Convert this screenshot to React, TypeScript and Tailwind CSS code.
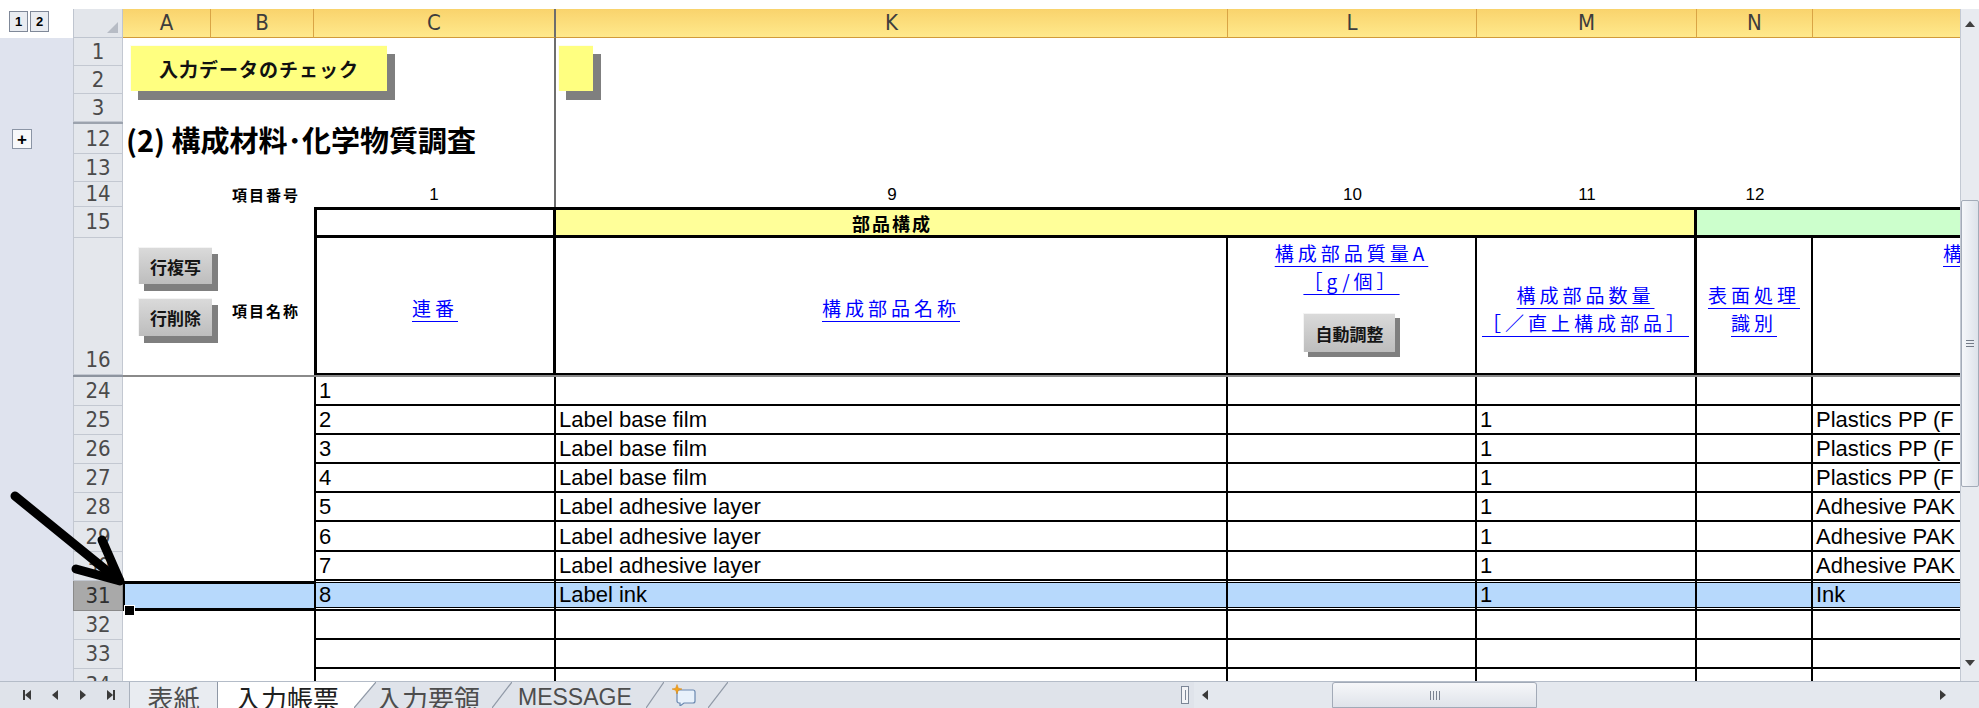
import React from "react";

const NARROW =
  "font-['Liberation_Sans_Narrow','DejaVu_Sans_Condensed','Liberation_Sans',sans-serif]";
const SANS = "font-['Liberation_Sans','Noto_Sans_CJK_JP',sans-serif]";
const JP = "font-['Noto_Sans_CJK_JP','Noto_Sans_CJK_SC',sans-serif]";

type Kids = { children?: React.ReactNode };

function Outline({ className = "", children }: { className?: string } & Kids) {
  return <div className={`w-[73px] shrink-0 bg-[#dfe3ee] ${className}`}>{children}</div>;
}

function RowHead({ n, active, bottom }: { n?: string; active?: boolean; bottom?: boolean }) {
  const tone = active
    ? "bg-[#a9a9a9] border-[#8a8a8a] text-[#2f2f2f]"
    : "bg-[#e4e7ec] border-[#c3c8d1] text-[#4b4b4b]";
  const place = bottom ? "items-end pb-[3px]" : "items-center";
  return (
    <div
      className={`flex w-[50px] shrink-0 justify-center border-x border-b text-[22px] leading-none ${NARROW} ${tone} ${place}`}
    >
      {n}
    </div>
  );
}

function Level({ children }: Kids) {
  return (
    <div className="flex h-[21px] w-[19px] items-center justify-center border border-[#7f8898] bg-[#e9ecf1] text-[13px] font-bold leading-none text-black">
      {children}
    </div>
  );
}

const HEAD = `flex shrink-0 items-center justify-center border-b border-b-[#d19a3a] bg-linear-to-b from-[#f9d36c] to-[#ffe98c] text-[22px] leading-none text-[#3d3d3d] ${NARROW}`;

function ColumnHeaders() {
  return (
    <div className="flex h-[29px] shrink-0">
      <div className="flex w-[73px] shrink-0 items-start gap-[2px] bg-white pl-[9px] pt-[2px]">
        <Level>1</Level>
        <Level>2</Level>
      </div>
      <div className="relative w-[50px] shrink-0 border-x border-b border-[#bfc5cf] bg-[#e3e6eb]">
        <div className="absolute bottom-[4px] right-[4px] h-0 w-0 border-b-[11px] border-l-[11px] border-b-[#b7bcc5] border-l-transparent" />
      </div>
      <div className={`w-[88px] border-r border-r-[#d9a445] ${HEAD}`}>A</div>
      <div className={`w-[103px] border-r border-r-[#d9a445] ${HEAD}`}>B</div>
      <div className={`w-[242px] border-r-2 border-r-[#6d6d6d] ${HEAD}`}>C</div>
      <div className={`w-[672px] border-r border-r-[#d9a445] ${HEAD}`}>K</div>
      <div className={`w-[249px] border-r border-r-[#d9a445] ${HEAD}`}>L</div>
      <div className={`w-[220px] border-r border-r-[#d9a445] ${HEAD}`}>M</div>
      <div className={`w-[116px] border-r border-r-[#d9a445] ${HEAD}`}>N</div>
      <div className={`w-[147px] ${HEAD}`} />
    </div>
  );
}

function TopRow({ n, h }: { n: string; h: string }) {
  return (
    <div className={`flex shrink-0 ${h}`}>
      <Outline />
      <RowHead n={n} />
      <div className="w-[433px] shrink-0 border-r-2 border-[#6d6d6d]" />
      <div className="w-[1404px] shrink-0" />
    </div>
  );
}

function HiddenRowsMark() {
  return (
    <div className="flex h-[2px] shrink-0">
      <Outline />
      <div className="w-[50px] shrink-0 bg-[#9ca3ae]" />
      <div className="w-[433px] shrink-0 border-r-2 border-[#6d6d6d]" />
      <div className="w-[1404px] shrink-0" />
    </div>
  );
}

function TitleRow() {
  return (
    <div className="flex h-[30px] shrink-0">
      <Outline className="flex items-center pl-[12px]">
        <div className="flex h-[20px] w-[20px] items-center justify-center border border-[#8b95a5] bg-[#f7f8fa] text-[17px] font-bold leading-none text-black">
          +
        </div>
      </Outline>
      <RowHead n="12" />
      <div
        className={`flex w-[433px] shrink-0 items-center whitespace-nowrap border-r-2 border-[#6d6d6d] pl-[3px] text-[29px] font-bold leading-none text-black ${JP}`}
      >
        (2) 構成材料･化学物質調査
      </div>
      <div className="w-[1404px] shrink-0" />
    </div>
  );
}

function NumberRow() {
  const num = "flex shrink-0 items-center justify-center text-[17px] leading-none text-black";
  return (
    <div className="flex h-[25px] shrink-0">
      <Outline />
      <RowHead n="14" />
      <div
        className={`flex w-[191px] shrink-0 items-center justify-end pr-[14px] text-[15px] font-bold leading-none tracking-[2px] ${JP}`}
      >
        項目番号
      </div>
      <div className={`w-[242px] border-r-2 border-[#6d6d6d] ${num}`}>1</div>
      <div className={`w-[672px] ${num}`}>9</div>
      <div className={`w-[249px] ${num}`}>10</div>
      <div className={`w-[220px] ${num}`}>11</div>
      <div className={`w-[116px] ${num}`}>12</div>
      <div className="w-[147px] shrink-0" />
    </div>
  );
}

function GroupRow() {
  return (
    <div className="flex h-[31px] shrink-0">
      <Outline />
      <RowHead n="15" />
      <div className="w-[191px] shrink-0" />
      <div className="w-[242px] shrink-0 border-[3px] border-black bg-white" />
      <div className="flex w-[1141px] shrink-0 border-y-[3px] border-r-[3px] border-black bg-[#ffff99]">
        <div
          className={`flex w-[672px] items-center justify-center text-[18px] font-bold leading-none tracking-[2px] ${JP}`}
        >
          部品構成
        </div>
      </div>
      <div className="w-[263px] shrink-0 border-y-[3px] border-black bg-[#ccffcc]" />
    </div>
  );
}

function Link({ children }: Kids) {
  return (
    <span
      className={`block whitespace-nowrap text-[19px] leading-[28px] tracking-[4px] text-[#0000ff] underline decoration-1 underline-offset-[5px] ${JP}`}
    >
      {children}
    </span>
  );
}

function GrayFace({ className = "", children }: { className?: string } & Kids) {
  return (
    <div
      className={`flex items-center justify-center border-l border-t border-[#f4f4f4] bg-linear-to-b from-[#dadada] to-[#bdbdbd] text-[17px] font-bold leading-none text-[#151515] ${JP} ${className}`}
    >
      {children}
    </div>
  );
}

function HeadingRow() {
  return (
    <div className="flex h-[137px] shrink-0">
      <Outline />
      <RowHead n="16" bottom />
      <div
        className={`flex w-[191px] shrink-0 items-center justify-end pr-[14px] pt-[8px] text-[15px] font-bold leading-none tracking-[2px] ${JP}`}
      >
        項目名称
      </div>
      <div className="flex w-[242px] shrink-0 items-center justify-center border-x-[3px] border-b-2 border-black pt-[5px]">
        <Link>連番</Link>
      </div>
      <div className="flex w-[672px] shrink-0 items-center justify-center border-b-2 border-r-2 border-black pt-[4px]">
        <Link>構成部品名称</Link>
      </div>
      <div className="flex w-[249px] shrink-0 flex-col items-center border-b-2 border-r-2 border-black pt-[1px]">
        <Link>構成部品質量A</Link>
        <Link>［g/個］</Link>
        <div className="relative mt-[18px] h-[44px] w-[97px]">
          <div className="absolute left-[5px] top-[5px] h-[39px] w-[92px] bg-[#7f7f7f]" />
          <GrayFace className="absolute left-0 top-0 h-[39px] w-[92px]">自動調整</GrayFace>
        </div>
      </div>
      <div className="flex w-[220px] shrink-0 flex-col items-center justify-center border-b-2 border-r-[3px] border-black pt-[7px]">
        <Link>構成部品数量</Link>
        <Link>［／直上構成部品］</Link>
      </div>
      <div className="flex w-[116px] shrink-0 flex-col items-center justify-center border-b-2 border-r-2 border-black pt-[7px]">
        <Link>表面処理</Link>
        <Link>識別</Link>
      </div>
      <div className="w-[147px] shrink-0 overflow-hidden border-b-2 border-black pl-[130px] pt-[1px]">
        <Link>構成材料</Link>
      </div>
    </div>
  );
}

function FreezeLine() {
  return (
    <div className="flex h-[2px] shrink-0">
      <Outline />
      <div className="w-[50px] shrink-0 bg-[#8d949f]" />
      <div className="w-[1837px] shrink-0 bg-[#8a8a8a]" />
    </div>
  );
}

function Cell({ className, children }: { className: string } & Kids) {
  return (
    <div
      className={`flex shrink-0 items-end overflow-hidden whitespace-nowrap border-b-2 border-black pb-[2px] pl-[3px] text-[22px] leading-[22px] text-black ${SANS} ${className}`}
    >
      {children}
    </div>
  );
}

type Item = { n: string; h: string; c?: string; k?: string; m?: string; o?: string };

const upper: Item[] = [
  { n: "24", h: "h-[29px]", c: "1" },
  { n: "25", h: "h-[29px]", c: "2", k: "Label base film", m: "1", o: "Plastics PP (F" },
  { n: "26", h: "h-[29px]", c: "3", k: "Label base film", m: "1", o: "Plastics PP (F" },
  { n: "27", h: "h-[29px]", c: "4", k: "Label base film", m: "1", o: "Plastics PP (F" },
  { n: "28", h: "h-[29px]", c: "5", k: "Label adhesive layer", m: "1", o: "Adhesive PAK" },
  { n: "29", h: "h-[30px]", c: "6", k: "Label adhesive layer", m: "1", o: "Adhesive PAK" },
  { n: "30", h: "h-[29px]", c: "7", k: "Label adhesive layer", m: "1", o: "Adhesive PAK" },
];

const lower: Item[] = [
  { n: "32", h: "h-[29px]" },
  { n: "33", h: "h-[29px]" },
];

function DataRow({ n, h, c, k, m, o }: Item) {
  return (
    <div className={`flex shrink-0 ${h}`}>
      <Outline />
      <RowHead n={n} />
      <div className="w-[191px] shrink-0" />
      <Cell className="w-[242px] border-x-2">{c}</Cell>
      <Cell className="w-[672px] border-r-2">{k}</Cell>
      <Cell className="w-[249px] border-r-2" />
      <Cell className="w-[220px] border-r-2">{m}</Cell>
      <Cell className="w-[116px] border-r-2" />
      <Cell className="w-[147px]">{o}</Cell>
    </div>
  );
}

function SelCell({ className, children }: { className: string } & Kids) {
  return (
    <div className={`flex shrink-0 flex-col border-black bg-[#b7d9fc] ${className}`}>
      <div className="h-px bg-white" />
      <div className="h-px bg-black" />
      <div
        className={`flex flex-1 items-end overflow-hidden whitespace-nowrap pb-[1px] pl-[3px] text-[22px] leading-[22px] text-black ${SANS}`}
      >
        {children}
      </div>
      <div className="h-px bg-black" />
      <div className="h-px bg-white" />
      <div className="h-[2px] bg-black" />
    </div>
  );
}

function ActiveRow() {
  return (
    <div className="flex h-[30px] shrink-0">
      <Outline />
      <RowHead n="31" active />
      <div className="w-[191px] shrink-0 border-y-[3px] border-l-2 border-black bg-[#b7d9fc]" />
      <SelCell className="w-[242px] border-x-2">8</SelCell>
      <SelCell className="w-[672px] border-r-2">Label ink</SelCell>
      <SelCell className="w-[249px] border-r-2" />
      <SelCell className="w-[220px] border-r-2">1</SelCell>
      <SelCell className="w-[116px] border-r-2" />
      <SelCell className="w-[147px]">Ink</SelCell>
    </div>
  );
}

function CutRow() {
  return (
    <div className="flex h-[12px] shrink-0 overflow-hidden">
      <Outline />
      <div
        className={`flex w-[50px] shrink-0 justify-center border-x border-[#c3c8d1] bg-[#e4e7ec] pt-[5px] text-[22px] leading-none text-[#4b4b4b] ${NARROW}`}
      >
        34
      </div>
      <div className="w-[191px] shrink-0" />
      <div className="w-[242px] shrink-0 border-x-2 border-black" />
      <div className="w-[672px] shrink-0 border-r-2 border-black" />
      <div className="w-[249px] shrink-0 border-r-2 border-black" />
      <div className="w-[220px] shrink-0 border-r-2 border-black" />
      <div className="w-[116px] shrink-0 border-r-2 border-black" />
      <div className="w-[147px] shrink-0" />
    </div>
  );
}

function Up() {
  return <div className="h-0 w-0 border-x-[5px] border-b-[6px] border-x-transparent border-b-[#404040]" />;
}
function Down() {
  return <div className="h-0 w-0 border-x-[5px] border-t-[6px] border-x-transparent border-t-[#404040]" />;
}
function Left() {
  return <div className="h-0 w-0 border-y-[5px] border-r-[6px] border-y-transparent border-r-[#3a3a3a]" />;
}
function Right() {
  return <div className="h-0 w-0 border-y-[5px] border-l-[6px] border-y-transparent border-l-[#3a3a3a]" />;
}

function VScroll() {
  return (
    <div className="flex w-[19px] shrink-0 flex-col border-l border-[#c3c9d3] bg-[#e8ebf0]">
      <div className="flex h-[30px] items-center justify-center">
        <Up />
      </div>
      <div className="h-[161px]" />
      <div className="flex h-[287px] items-center justify-center rounded-[2px] border border-[#a3abb8] bg-linear-to-r from-[#f5f7fa] to-[#dde2ea]">
        <div className="flex flex-col gap-[2px]">
          <div className="h-px w-[8px] bg-[#737b88]" />
          <div className="h-px w-[8px] bg-[#737b88]" />
          <div className="h-px w-[8px] bg-[#737b88]" />
        </div>
      </div>
      <div className="h-[163px]" />
      <div className="flex h-[26px] items-center justify-center">
        <Down />
      </div>
      <div className="h-[5px]" />
    </div>
  );
}

function Slant({ w, active }: { w: string; active?: boolean }) {
  return (
    <svg className={`${w} h-[26px] shrink-0`} viewBox="0 0 20 26" preserveAspectRatio="none">
      {active && <polygon points="0,0 20,0 0,26" fill="#ffffff" />}
      <line
        x1="0"
        y1="26"
        x2="20"
        y2="0"
        stroke="#8f98a6"
        strokeWidth="1.2"
        vectorEffect="non-scaling-stroke"
      />
    </svg>
  );
}

function NewSheetIcon() {
  return (
    <svg width="28" height="22" viewBox="0 0 28 22">
      <path
        d="M8 6 h14 a2 2 0 0 1 2 2 v9 a2 2 0 0 1 -2 2 h-9 l-4 3 v-3 h-1 a2 2 0 0 1 -2 -2 v-9 a2 2 0 0 1 2 -2z"
        fill="#e8f1fb"
        stroke="#6a88b0"
        strokeWidth="1.2"
      />
      <path
        d="M6 0.5 L7.3 4.2 L11 5 L7.3 6.3 L6 10 L4.7 6.3 L1 5 L4.7 4.2 Z"
        fill="#f3a31c"
        stroke="#d9820b"
        strokeWidth="0.5"
      />
    </svg>
  );
}

function SheetTabs() {
  const tab = `flex shrink-0 pt-[3px] text-[26px] leading-none text-[#4d4d4d] ${JP}`;
  return (
    <div className="flex h-[27px] border-t border-[#b4bcc8] bg-[#dfe3ea]">
      <div className="flex w-[125px] shrink-0 items-center pl-[13px]">
        <div className="flex w-[28px] items-center justify-center">
          <div className="h-[10px] w-[2px] bg-[#3a3a3a]" />
          <Left />
        </div>
        <div className="flex w-[28px] items-center justify-center">
          <Left />
        </div>
        <div className="flex w-[28px] items-center justify-center">
          <Right />
        </div>
        <div className="flex w-[28px] items-center justify-center">
          <Right />
          <div className="h-[10px] w-[2px] bg-[#3a3a3a]" />
        </div>
      </div>
      <div className="w-[5px] shrink-0 border-r border-[#a9b1bd]" />
      <div className={`w-[88px] justify-center border-r border-[#8e97a5] bg-[#e9ecf1] ${tab}`}>表紙</div>
      <div className={`w-[136px] bg-white pl-[17px] ${tab}`}>
        <span className="text-[#202020]">入力帳票</span>
      </div>
      <Slant w="w-[22px]" active />
      <div className={`w-[116px] ${tab}`}>入力要領</div>
      <Slant w="w-[20px]" />
      <div className={`flex w-[134px] shrink-0 pl-[6px] pt-[4px] text-[23px] leading-none text-[#4d4d4d] ${SANS}`}>
        MESSAGE
      </div>
      <Slant w="w-[18px]" />
      <div className="flex w-[44px] shrink-0 items-center pl-[7px]">
        <NewSheetIcon />
      </div>
      <Slant w="w-[20px]" />
      <div className="w-[448px] shrink-0" />
      <div className="flex w-[18px] shrink-0 items-center justify-center">
        <div className="flex h-[18px] w-[8px] justify-center border border-[#7c8696] bg-[#f3f4f7]">
          <div className="mt-[3px] h-[10px] w-px bg-[#7c8696]" />
        </div>
      </div>
      <div className="flex w-[22px] shrink-0 items-center justify-center bg-[#e4e8ee]">
        <Left />
      </div>
      <div className="w-[116px] shrink-0 bg-[#e4e8ee]" />
      <div className="flex w-[205px] shrink-0 items-center justify-center rounded-t-[3px] border border-[#a2aab7] bg-linear-to-b from-[#f6f7f9] to-[#dfe3ea]">
        <div className="flex gap-[2px]">
          <div className="h-[9px] w-px bg-[#7a8290]" />
          <div className="h-[9px] w-px bg-[#7a8290]" />
          <div className="h-[9px] w-px bg-[#7a8290]" />
          <div className="h-[9px] w-px bg-[#7a8290]" />
        </div>
      </div>
      <div className="w-[395px] shrink-0 bg-[#e4e8ee]" />
      <div className="flex w-[22px] shrink-0 items-center justify-center bg-[#e4e8ee]">
        <Right />
      </div>
      <div className="w-[25px] shrink-0 bg-[#e4e8ee]" />
    </div>
  );
}

export default function App() {
  return (
    <div className={`relative h-[708px] w-[1979px] overflow-hidden bg-white ${SANS}`}>
      <div className="h-[9px]" />
      <div className="flex h-[672px]">
        <div className="flex w-[1960px] shrink-0 flex-col">
          <ColumnHeaders />
          <TopRow n="1" h="h-[28px]" />
          <TopRow n="2" h="h-[28px]" />
          <TopRow n="3" h="h-[28px]" />
          <HiddenRowsMark />
          <TitleRow />
          <TopRow n="13" h="h-[28px]" />
          <NumberRow />
          <GroupRow />
          <HeadingRow />
          <FreezeLine />
          {upper.map((r) => (
            <DataRow key={r.n} {...r} />
          ))}
          <ActiveRow />
          {lower.map((r) => (
            <DataRow key={r.n} {...r} />
          ))}
          <CutRow />
        </div>
        <VScroll />
      </div>
      <SheetTabs />

      {/* floating form buttons */}
      <div className="absolute left-[130px] top-[45px] h-[55px] w-[265px]">
        <div className="absolute left-[8px] top-[9px] h-[46px] w-[257px] bg-[#7f7f7f]" />
        <div
          className={`absolute left-0 top-0 flex h-[46px] w-[257px] items-center justify-center border-l border-t border-[#fdfdf0] bg-[#ffff80] text-[19px] font-bold leading-none tracking-[1px] text-[#111] ${JP}`}
        >
          入力データのチェック
        </div>
      </div>
      <div className="absolute left-[558px] top-[45px] h-[55px] w-[43px]">
        <div className="absolute left-[8px] top-[9px] h-[46px] w-[35px] bg-[#7f7f7f]" />
        <div className="absolute left-0 top-0 h-[46px] w-[35px] border-l border-t border-[#fdfdf0] bg-[#ffff80]" />
      </div>
      <div className="absolute left-[138px] top-[247px] h-[44px] w-[80px]">
        <div className="absolute left-[6px] top-[7px] h-[37px] w-[74px] bg-[#7f7f7f]" />
        <GrayFace className="absolute left-0 top-0 h-[37px] w-[74px]">行複写</GrayFace>
      </div>
      <div className="absolute left-[138px] top-[298px] h-[45px] w-[80px]">
        <div className="absolute left-[6px] top-[7px] h-[38px] w-[74px] bg-[#7f7f7f]" />
        <GrayFace className="absolute left-0 top-0 h-[38px] w-[74px]">行削除</GrayFace>
      </div>

      {/* fill handle of the active cell */}
      <div className="absolute left-[124px] top-[605px] h-[11px] w-[11px] border border-white bg-black" />

      {/* pointer arrow */}
      <svg
        className="absolute left-0 top-[480px] h-[110px] w-[140px]"
        viewBox="0 0 140 110"
      >
        <g stroke="#000" strokeWidth="9" strokeLinecap="round" strokeLinejoin="round" fill="none">
          <line x1="15" y1="16" x2="117" y2="99" />
          <polyline points="102,60 120,101 76,89" />
        </g>
      </svg>
    </div>
  );
}
